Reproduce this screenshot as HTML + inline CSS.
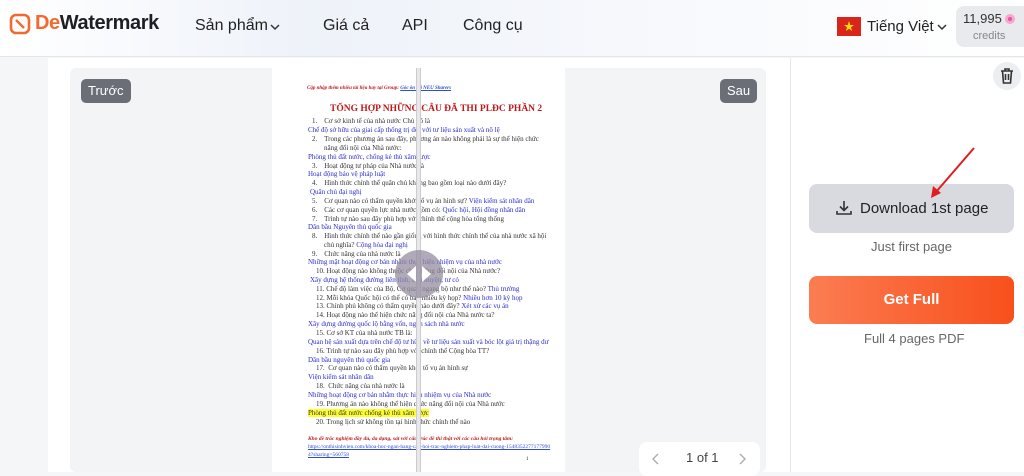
<!DOCTYPE html>
<html><head><meta charset="utf-8">
<style>
*{margin:0;padding:0;box-sizing:border-box}
body{width:1024px;height:472px;overflow:hidden;background:#f5f6f8;font-family:"Liberation Sans",sans-serif;position:relative;color:#222}
.hdr{position:absolute;left:0;top:0;width:1024px;height:57px;background:linear-gradient(90deg,#fff 0%,#eef2f9 30%,#f6f8fc 60%,#fff 100%);border-bottom:1px solid #e4e6ea}
.a{position:absolute;white-space:nowrap}
.main{position:absolute;left:48px;top:58px;width:742px;height:414px;background:#fff}
.viewer{position:absolute;left:70px;top:68px;width:696px;height:404px;background:#f3f4f6;border-radius:6px}
.page{position:absolute;left:272px;top:68px;width:293px;height:404px;background:#fff}
.page .a{font-family:"Liberation Serif",serif;font-size:7px;line-height:8px}
.b{color:#2b2bd0}
.k{color:#333}
.right{position:absolute;left:790px;top:58px;width:234px;height:414px;background:#fff;border-left:1px solid #e6e7ea}
</style></head><body>
<div class="hdr"></div>
<svg class="a" style="left:9px;top:13px" width="22" height="22" viewBox="0 0 22 22"><rect x="2" y="2" width="18" height="18" rx="5" fill="none" stroke="#f26a2e" stroke-width="2.6"/><path d="M7 7 L15 15" stroke="#f26a2e" stroke-width="2.4"/></svg>
<div class="a" style="left:35px;top:12px;font-size:20px;font-weight:bold;letter-spacing:-0.4px"><span style="color:#f26a2e">De</span><span style="color:#1e1e24">Watermark</span></div>
<div class="a" style="left:195px;top:17px;font-size:16px;color:#222">Sản phẩm</div>
<svg class="a" style="left:270px;top:23px" width="10" height="8"><path d="M1 2 L5 6 L9 2" stroke="#333" stroke-width="1.5" fill="none"/></svg>
<div class="a" style="left:323px;top:17px;font-size:16px">Giá cả</div>
<div class="a" style="left:402px;top:17px;font-size:16px">API</div>
<div class="a" style="left:463px;top:17px;font-size:16px">Công cụ</div>
<svg class="a" style="left:837px;top:17px" width="24" height="19"><rect width="24" height="19" fill="#da251d"/><polygon points="12,4 13.2,8 17,8 14,10.3 15.1,14 12,11.8 8.9,14 10,10.3 7,8 10.8,8" fill="#ffde00"/></svg>
<div class="a" style="left:867px;top:18px;font-size:15px">Tiếng Việt</div>
<svg class="a" style="left:937px;top:23px" width="10" height="8"><path d="M1 2 L5 6 L9 2" stroke="#333" stroke-width="1.5" fill="none"/></svg>
<div class="a" style="left:956px;top:6px;width:68px;height:41px;background:#e9eaee;border-radius:8px 0 0 8px"></div>
<div class="a" style="left:963px;top:11px;font-size:13px;color:#333">11,995</div>
<div class="a" style="left:1005px;top:14px;width:10px;height:10px;border-radius:50%;background:#f04fa0;border:3px solid #f7a8cf"></div>
<div class="a" style="left:973px;top:30px;font-size:11px;color:#888">credits</div>

<div class="main"></div>
<div class="viewer"></div>
<div class="page">
<div class="a" style="left:35px;top:17px;color:#c01818;font-style:italic;font-weight:bold;font-size:5px">Cập nhập thêm nhiều tài liệu hay tại Group: <span style="color:#2b4fd0;text-decoration:underline">Góc ôn thi NEU Sharers</span></div>
<div class="a" style="left:58px;top:36px;color:#c01818;font-weight:bold;font-size:9.5px;line-height:10px">TỔNG HỢP NHỮNG CÂU ĐÃ THI PLĐC PHẦN 2</div>
<div class="a k" style="left:40px;top:49px">1.&nbsp;&nbsp;&nbsp; Cơ sở kinh tế của nhà nước Chủ nô là</div>
<div class="a b" style="left:36px;top:58px">Chế độ sở hữu của giai cấp thống trị đối với tư liệu sản xuất và nô lệ</div>
<div class="a k" style="left:40px;top:67px">2.&nbsp;&nbsp;&nbsp; Trong các phương án sau đây, phương án nào không phải là sự thể hiện chức</div>
<div class="a k" style="left:52px;top:76px">năng đối nội của Nhà nước:</div>
<div class="a b" style="left:36px;top:85px">Phòng thủ đất nước, chống kẻ thù xâm lược</div>
<div class="a k" style="left:40px;top:94px">3.&nbsp;&nbsp;&nbsp; Hoạt động tư pháp của Nhà nước là</div>
<div class="a b" style="left:36px;top:102px">Hoạt động bảo vệ pháp luật</div>
<div class="a k" style="left:40px;top:111px">4.&nbsp;&nbsp;&nbsp; Hình thức chính thể quân chủ không bao gồm loại nào dưới đây?</div>
<div class="a b" style="left:38px;top:120px">Quân chủ đại nghị</div>
<div class="a k" style="left:40px;top:129px">5.&nbsp;&nbsp;&nbsp; Cơ quan nào có thẩm quyền khởi tố vụ án hình sự? <span class="b">Viện kiểm sát nhân dân</span></div>
<div class="a k" style="left:40px;top:138px">6.&nbsp;&nbsp;&nbsp; Các cơ quan quyền lực nhà nước gồm có: <span class="b">Quốc hội, Hội đồng nhân dân</span></div>
<div class="a k" style="left:40px;top:147px">7.&nbsp;&nbsp;&nbsp; Trình tự nào sau đây phù hợp với chính thể cộng hòa tổng thống</div>
<div class="a b" style="left:36px;top:155px">Dân bầu Nguyên thủ quốc gia</div>
<div class="a k" style="left:40px;top:164px">8.&nbsp;&nbsp;&nbsp; Hình thức chính thể nào gần giống với hình thức chính thể của nhà nước xã hội</div>
<div class="a k" style="left:52px;top:173px">chủ nghĩa? <span class="b">Cộng hòa đại nghị</span></div>
<div class="a k" style="left:40px;top:182px">9.&nbsp;&nbsp;&nbsp; Chức năng của nhà nước là</div>
<div class="a b" style="left:36px;top:190px">Những mặt hoạt động cơ bản nhằm thực hiện nhiệm vụ của nhà nước</div>
<div class="a k" style="left:44px;top:199px">10. Hoạt động nào không thuộc chức năng đối nội của Nhà nước?</div>
<div class="a b" style="left:38px;top:208px">Xây dựng hệ thống đường liên tỉnh, liên huyện, tư có</div>
<div class="a k" style="left:44px;top:217px">11. Chế độ làm việc của Bộ, Cơ quan ngang bộ như thế nào? <span class="b">Thủ trưởng</span></div>
<div class="a k" style="left:44px;top:226px">12. Mỗi khóa Quốc hội có thể có bao nhiêu kỳ họp? <span class="b">Nhiều hơn 10 kỳ họp</span></div>
<div class="a k" style="left:44px;top:234px">13. Chính phủ không có thẩm quyền nào dưới đây? <span class="b">Xét xử các vụ án</span></div>
<div class="a k" style="left:44px;top:243px">14. Hoạt động nào thể hiện chức năng đối nội của Nhà nước ta?</div>
<div class="a b" style="left:36px;top:252px">Xây dựng đường quốc lộ bằng vốn, ngân sách nhà nước</div>
<div class="a k" style="left:44px;top:261px">15. Cơ sở KT của nhà nước TB là:</div>
<div class="a b" style="left:36px;top:270px">Quan hệ sản xuất dựa trên chế độ tư hữu về tư liệu sản xuất và bóc lột giá trị thặng dư</div>
<div class="a k" style="left:44px;top:279px">16. Trình tự nào sau đây phù hợp với chính thể Cộng hòa TT?</div>
<div class="a b" style="left:36px;top:288px">Dân bầu nguyên thủ quốc gia</div>
<div class="a k" style="left:44px;top:296px">17.&nbsp; Cơ quan nào có thẩm quyền khởi tố vụ án hình sự</div>
<div class="a b" style="left:36px;top:305px">Viện kiểm sát nhân dân</div>
<div class="a k" style="left:44px;top:314px">18.&nbsp; Chức năng của nhà nước là</div>
<div class="a b" style="left:36px;top:323px">Những hoạt động cơ bản nhằm thực hiện nhiệm vụ của Nhà nước</div>
<div class="a k" style="left:44px;top:332px">19. Phương án nào không thể hiện chức năng đối nội của Nhà nước</div>
<div class="a k" style="left:36px;top:341px;background:#ffff30">Phòng thủ đất nước chống kẻ thù xâm lược</div>
<div class="a k" style="left:44px;top:350px">20. Trong lịch sử không tồn tại hình thức chính thể nào</div>
<div class="a" style="left:36px;top:367px;color:#c01818;font-style:italic;font-weight:bold;font-size:5.5px">Kho đề trắc nghiệm đầy đủ, đa dạng, sát với cấu trúc đề thi thật với các câu hỏi trọng tâm:</div>
<div class="a" style="left:36px;top:375px;color:#2b4fd0;text-decoration:underline;font-size:5.5px">https://onthisinhvien.com/khoa-hoc-ngan-hang-cau-hoi-trac-nghiem-phap-luat-dai-cuong-1548352277177990</div>
<div class="a" style="left:36px;top:383px;color:#2b4fd0;text-decoration:underline;font-size:5.5px">4?sharing=560758</div>
<div class="a" style="left:254px;top:388px;font-size:5px">1</div>
</div>
<div class="a" style="left:416px;top:68px;width:5px;height:404px;background:#e8e8ec;border-left:1px solid #ccc;border-right:1px solid #ccc"></div>
<div class="a" style="left:395px;top:250px;width:48px;height:48px;border-radius:50%;background:rgba(150,140,160,0.75)"></div>
<svg class="a" style="left:403px;top:263px" width="32" height="22"><polygon points="13,3 13,19 4,11" fill="#fff"/><polygon points="19,3 19,19 28,11" fill="#fff"/></svg>
<div class="a" style="left:81px;top:79px;height:24px;padding:0 7px;background:#6b6e76;border-radius:5px;color:#fff;font-size:13px;line-height:24px">Trước</div>
<div class="a" style="left:720px;top:79px;height:24px;padding:0 7px;background:#6b6e76;border-radius:5px;color:#fff;font-size:13px;line-height:24px">Sau</div>
<div class="a" style="left:639px;top:442px;width:121px;height:34px;background:#fff;border-radius:8px"></div>
<svg class="a" style="left:651px;top:452px" width="10" height="14"><path d="M7 2 L2 7 L7 12" stroke="#aaa" stroke-width="1.3" fill="none"/></svg>
<div class="a" style="left:686px;top:450px;font-size:13px;color:#444">1 of 1</div>
<svg class="a" style="left:737px;top:452px" width="10" height="14"><path d="M3 2 L8 7 L3 12" stroke="#aaa" stroke-width="1.3" fill="none"/></svg>

<div class="right"></div>
<div class="a" style="left:993px;top:62px;width:28px;height:28px;border-radius:50%;background:#eceef1"></div>
<svg class="a" style="left:998px;top:66px" width="18" height="20" viewBox="0 0 18 20"><path d="M3 5 H15 M7 5 V3 H11 V5 M4.5 5 L5.5 17 H12.5 L13.5 5 M7.5 8 V14 M10.5 8 V14" stroke="#333" stroke-width="1.6" fill="none"/></svg>
<div class="a" style="left:809px;top:184px;width:205px;height:49px;background:#d9dadf;border-radius:8px"></div>
<svg class="a" style="left:835px;top:199px" width="18" height="18" viewBox="0 0 18 18"><path d="M9 2 V11 M5 7.5 L9 11.5 L13 7.5 M2 12 V15 H16 V12" stroke="#333" stroke-width="1.6" fill="none"/></svg>
<div class="a" style="left:860px;top:200px;font-size:15px;color:#222">Download 1st page</div>
<svg class="a" style="left:910px;top:140px" width="80" height="70"><path d="M64 8 L26 52" stroke="#e21d1d" stroke-width="2"/><polygon points="21,58 23,46 31,53" fill="#e21d1d"/></svg>
<div class="a" style="left:871px;top:239px;font-size:13px;color:#666">Just first page</div>
<div class="a" style="left:809px;top:276px;width:205px;height:48px;background:linear-gradient(90deg,#fb7d52,#fa6a3c 40%,#f8501c);border-radius:8px;color:#fff;font-size:15px;font-weight:bold;text-align:center;line-height:48px">Get Full</div>
<div class="a" style="left:864px;top:331px;font-size:13px;color:#666">Full 4 pages PDF</div>
</body></html>
